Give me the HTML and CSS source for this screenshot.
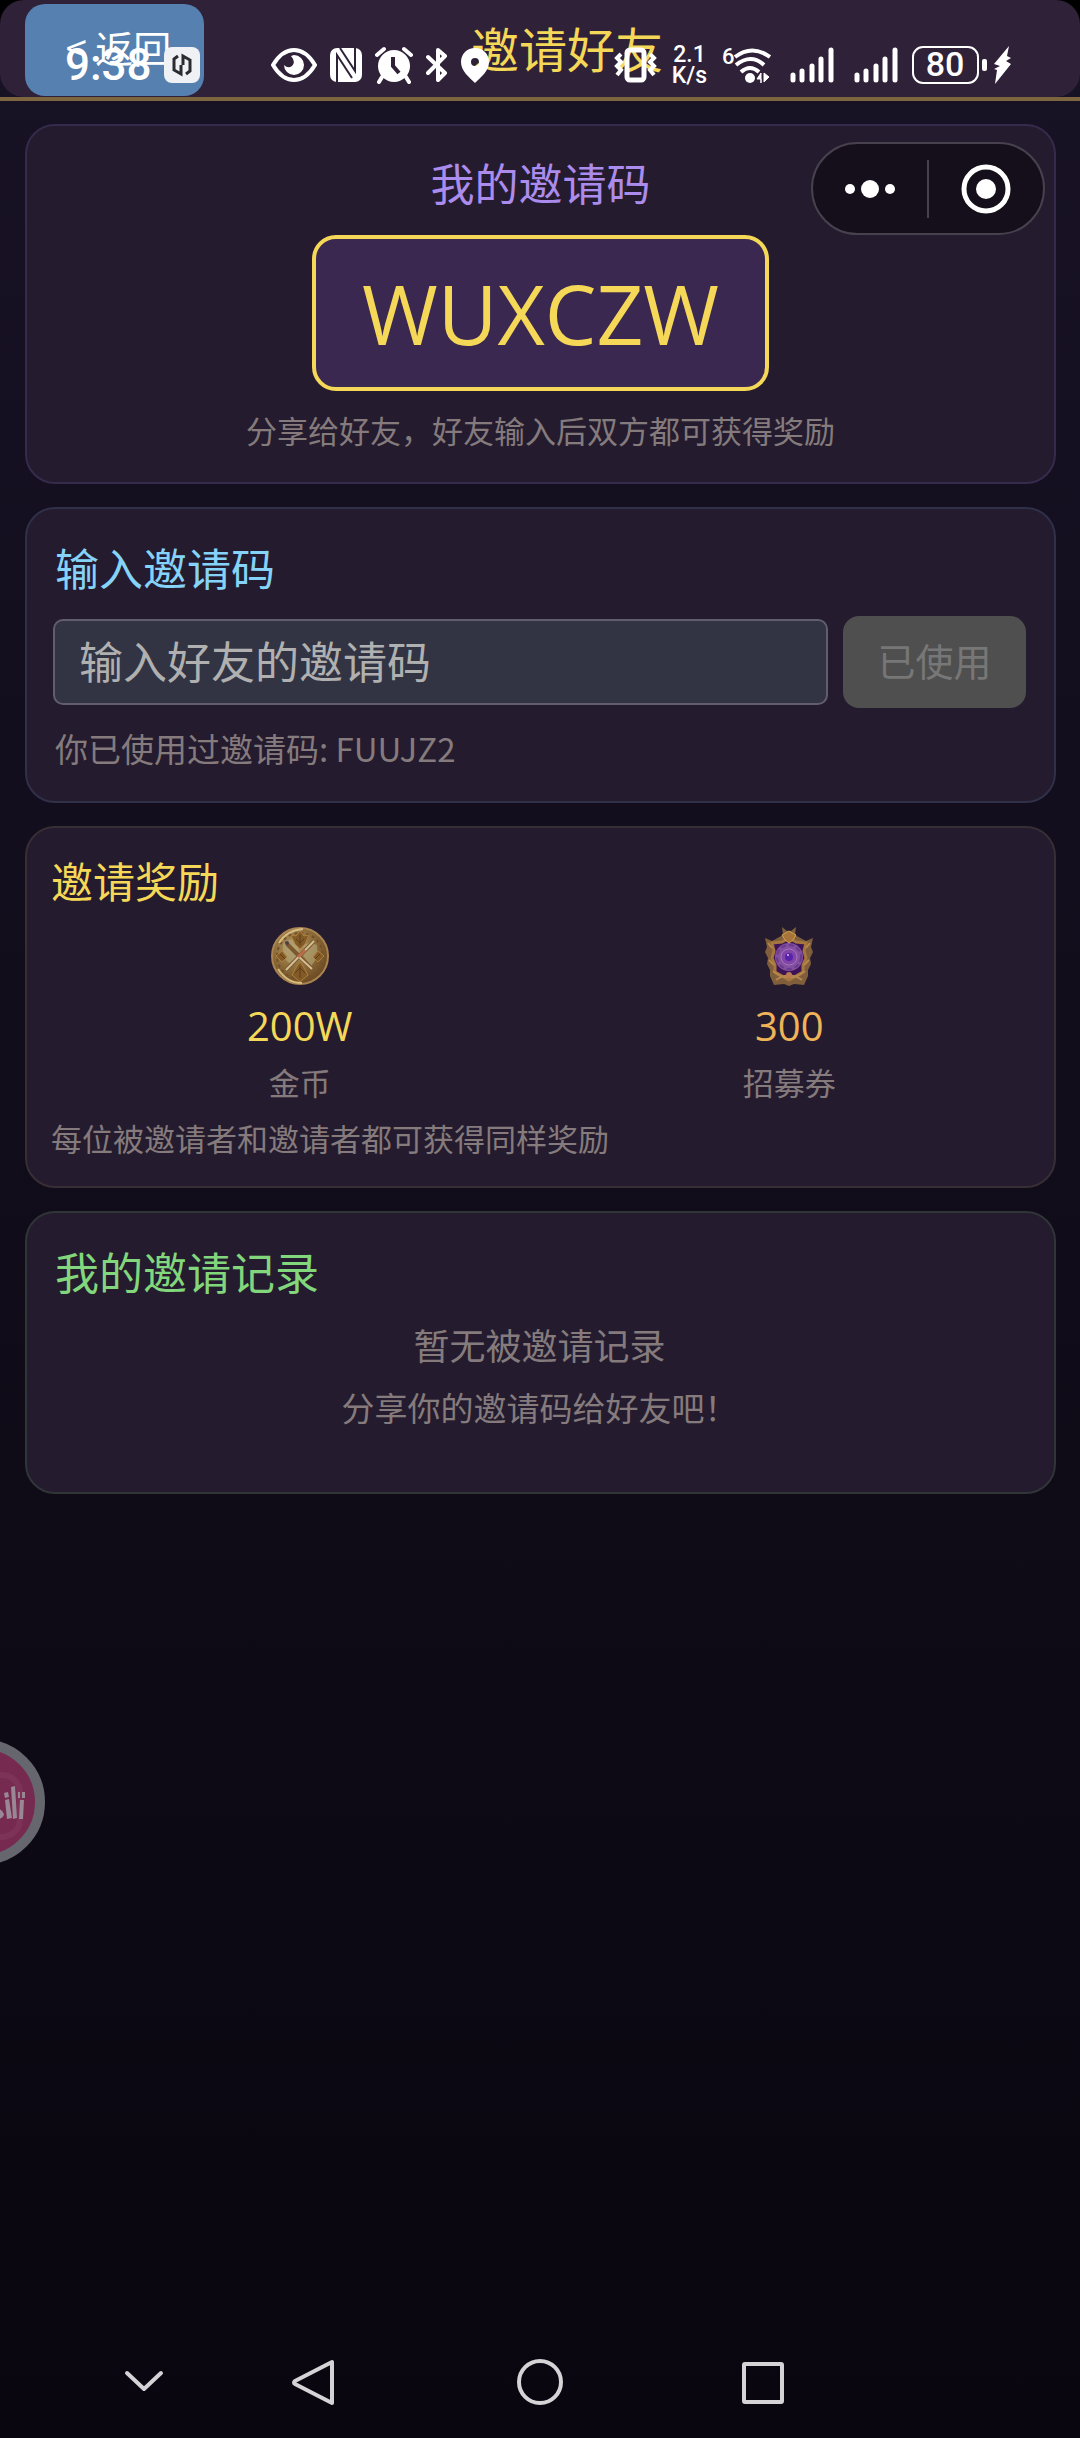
FILE: index.html
```
<!DOCTYPE html>
<html lang="zh-CN">
<head>
	<meta charset="UTF-8">
	<meta name="viewport" content="width=device-width, initial-scale=1.0">
	<title>邀请好友</title>
	<link rel="stylesheet" href="styles.css">
</head>
<body>
	<header class="header">
		<div class="header-bar">
			<button class="back-button" type="button">&lt; 返回</button>
			<h1>邀请好友</h1>
		</div>
	</header>

	<main class="content">
		<section class="card card-code">
			<h2>我的邀请码</h2>
			<div class="invite-code">WUXCZW</div>
			<p class="hint small">分享给好友，好友输入后双方都可获得奖励</p>
		</section>

		<section class="card card-input">
			<h2><label for="friend-code">输入邀请码</label></h2>
			<div class="input-row">
				<input id="friend-code" type="text" placeholder="输入好友的邀请码">
				<button class="used-button" type="button" disabled>已使用</button>
			</div>
			<p class="hint">你已使用过邀请码: FUUJZ2</p>
		</section>

		<section class="card card-reward">
			<h2>邀请奖励</h2>
			<div class="reward-list">
				<div class="reward">
					<svg width="60" height="60" viewBox="0 0 60 60">
						<defs>
							<radialGradient id="coin" cx="40%" cy="35%" r="65%">
								<stop offset="0" stop-color="#b39b66"/>
								<stop offset="0.6" stop-color="#8a6a38"/>
								<stop offset="1" stop-color="#6d4c24"/>
							</radialGradient>
						</defs>
						<circle cx="30" cy="30" r="28" fill="url(#coin)" stroke="#a98350" stroke-width="2"/>
						<circle cx="30" cy="30" r="23" fill="none" stroke="#74502a" stroke-width="2" stroke-dasharray="3 3"/>
						<path d="M13 18q8-8 13-2l4 12-9 10q-9-4-8-20zM47 19q-8-4-13 0l-2 9 9 12q8-8 6-21z" fill="#b5a77c" opacity=".6"/>
						<path d="M30 5l4 5 5-1-4 9-5 5-5-5-4-9 5 1zM6 30l6-5 5 6-5 5zM54 30l-6-5-5 6 5 5zM30 56l-8-7 5-9 3-4 3 4 5 9z" fill="#825a26" stroke="#ad7f3c"/>
						<path d="M30 9v10M26 13l4 4 4-4M30 40v12M25 47l5-5 5 5M10 28l5 5M50 28l-5 5" fill="none" stroke="#5f3d1c"/>
						<path d="M17 18l25 25M44 15L16 44" stroke="#7b5930" stroke-width="4"/>
						<path d="M28 30l14 13M44 15L16 44" stroke="#d3bd92" stroke-width="2"/>
						<path d="M28 31l7-7" stroke="#bb6a48" stroke-width="3"/>
						<circle cx="17" cy="17" r="2" fill="#4f3d44"/>
						<path d="M8 43q9 14 24 14M9 17Q17 4 33 3" fill="none" stroke="#d6bb80" stroke-width="2"/>
					</svg>
					<span class="amount gold">200W</span>
					<span class="hint small">金币</span>
				</div>
				<div class="reward">
					<svg width="60" height="60" viewBox="0 0 60 60">
						<path d="M6 12l7 3 11-6-1-8 5 4h4l5-4-1 8 11 6 7-3-2 9 2 5-3 6 1 6-3 6v6l-4 9-10-1-5 2-5-2-10 1-4-9v-6l-3-6 1-6-3-6 2-5z" fill="#805e3c"/>
						<path d="M13 17l2 8-2 7 3 7v7l14 8 14-8v-7l3-7-2-7 2-8-10-1-7-4-7 4z" fill="#3c1456" stroke="#a5773e" stroke-width="3"/>
						<circle cx="30" cy="31" r="14" fill="#8350a0"/>
						<circle cx="30" cy="31" r="12" fill="none" stroke="#6a3a8c" stroke-width="2" stroke-dasharray="5 3"/>
						<circle cx="30" cy="31" r="8" fill="#8145a8" stroke="#a874c0" stroke-width="1"/>
						<circle cx="30" cy="31" r="4" fill="#5722aa"/>
						<circle cx="29" cy="29" r="1" fill="#dfbaf2"/>
						<path d="M23 9l7-4 7 4-3 5-4 3-4-3z" fill="#a87538" stroke="#cda055"/>
						<path d="M14 45q8 7 16 6 8 1 16-6M17 54q7-5 13-4 6-1 13 4M9 17l4 5M51 17l-4 5M10 34l5 5M50 34l-5 5" fill="none" stroke="#b5864a" stroke-width="2"/>
						<circle cx="30" cy="49" r="3" fill="#b97b51"/>
					</svg>
					<span class="amount orange">300</span>
					<span class="hint small">招募券</span>
				</div>
			</div>
			<p class="hint small">每位被邀请者和邀请者都可获得同样奖励</p>
		</section>

		<section class="card card-records">
			<h2>我的邀请记录</h2>
			<div class="empty">
				<p class="empty-title">暂无被邀请记录</p>
				<p class="hint">分享你的邀请码给好友吧！</p>
			</div>
		</section>
	</main>

	<!-- Mini program menu -->
	<div class="capsule">
		<button type="button" aria-label="更多">
			<svg width="50" height="50" viewBox="0 0 50 50" fill="#fff">
				<circle cx="5" cy="25" r="5"/><circle cx="25" cy="25" r="9"/><circle cx="45" cy="25" r="5"/>
			</svg>
		</button>
		<button type="button" aria-label="关闭">
			<svg width="50" height="50" viewBox="0 0 50 50">
				<circle cx="25" cy="25" r="22" fill="none" stroke="#fff" stroke-width="5"/>
				<circle cx="25" cy="25" r="10" fill="#fff"/>
			</svg>
		</button>
	</div>

	<!-- Floating bubble docked on the left edge -->
	<div class="bubble">
		<svg width="126" height="126" viewBox="0 0 126 126">
			<circle cx="63" cy="63" r="58" fill="#762a50" stroke="#66666f" stroke-width="10"/>
			<rect x="20" y="36" width="81" height="62" rx="18" fill="none" stroke="#7d3258" stroke-width="6"/>
			<g fill="#9a8794">
				<path d="M66 68q16-1 19 7 0 6-19 8z"/>
				<path d="M86 61l4-1 3 19-5 1zM92 48l4-1 2 32-4 1zM101 61h4l-1 19h-4zM85 54l4-1 1 5-4 1zM99 53h2v6h-2zM103 53h3v6h-3z"/>
			</g>
		</svg>
	</div>

	<!-- System status bar -->
	<div class="status-bar">
		<div class="status-group">
			<span class="time">9:38</span>
			<svg class="app-icon" width="36" height="38" viewBox="0 0 36 38">
				<rect y="1" width="36" height="36" rx="8" fill="#f0f1f5"/>
				<path d="M14 10l-4 3v11l7 4v-9M22 28l4-3V14l-7-4v9" fill="none" stroke="#2c2c30" stroke-width="3"/>
			</svg>
			<svg width="46" height="38" viewBox="0 0 46 38">
				<path d="M2 19Q11 4 23 4t21 15Q35 34 23 34T2 19z" fill="none" stroke="#fff" stroke-width="4"/>
				<path d="M23 9a10 10 0 1 1-10 10q4 4 8 1 4-4-1-10z" fill="#fff"/>
			</svg>
			<svg width="32" height="38" viewBox="0 0 32 38">
				<rect y="2" width="32" height="34" rx="7" fill="#fff"/>
				<path d="M7 36V9l15 23M10 2l15 23V2" fill="none" stroke="#2f2138" stroke-width="2"/>
			</svg>
			<svg width="38" height="38" viewBox="0 0 38 38">
				<circle cx="19" cy="20" r="16" fill="#fff"/>
				<path d="M2 9l7-6M36 9l-7-6M7 31l-3 5M31 31l3 5" stroke="#fff" stroke-width="4" stroke-linecap="round"/>
				<path d="M18 11v9l6 7" fill="none" stroke="#2f2138" stroke-width="4"/>
			</svg>
			<svg width="22" height="38" viewBox="0 0 22 38">
				<path d="M2 11l17 16-7 7V4l7 6L2 27" fill="none" stroke="#fff" stroke-width="4" stroke-linejoin="round" stroke-linecap="round"/>
			</svg>
			<svg width="28" height="38" viewBox="0 0 28 38">
				<path fill-rule="evenodd" d="M14 2C6 2 0 8 0 16c0 9 8 15 14 21 6-6 14-12 14-21 0-8-6-14-14-14zm0 10a4 4 0 1 1 0 8 4 4 0 0 1 0-8z" fill="#fff"/>
			</svg>
		</div>
		<div class="status-group">
			<svg width="43" height="38" viewBox="0 0 43 38" fill="none" stroke="#fff">
				<rect x="13" y="4" width="17" height="30" rx="3" stroke-width="5"/>
				<path d="M7 8L3 12l4 4-4 4 4 4-4 5M36 8l4 4-4 4 4 4-4 4 4 5" stroke-width="4"/>
			</svg>
			<span class="speed">2.1<br>K/s</span>
			<svg width="49" height="38" viewBox="0 0 49 38">
				<text x="0" y="18" class="wifi-gen">6</text>
				<path d="M13 11q17-13 35 0M14 19q15-12 28 0M19 26q9-8 18 0" fill="none" stroke="#fff" stroke-width="4"/>
				<circle cx="28" cy="32" r="5" fill="#fff"/>
				<path d="M39 37V27l-4 6h4zM42 27v9l5-5z" fill="#fff" stroke="#fff"/>
			</svg>
			<div class="signals">
				<svg width="44" height="38" viewBox="0 0 44 38" stroke="#fff" stroke-width="5" stroke-linecap="round">
					<path d="M3 29v5M12 25v9M22 20v14M31 13v21M41 4v30"/>
				</svg>
				<svg width="44" height="38" viewBox="0 0 44 38" stroke="#fff" stroke-width="5" stroke-linecap="round">
					<path d="M3 29v5M12 25v9M22 20v14M31 13v21M41 4v30"/>
				</svg>
			</div>
			<svg width="99" height="38" viewBox="0 0 99 38">
				<rect x="1" y="1" width="65" height="36" rx="10" fill="none" stroke="#fff" stroke-width="2"/>
				<text x="33" y="30" text-anchor="middle" class="battery-level">80</text>
				<rect x="70" y="13" width="5" height="12" rx="2" fill="#fff"/>
				<path d="M97 0L82 18l6 2-6 3 3 1-2 14 16-20-5-3 5-3-4-2z" fill="#fff"/>
			</svg>
		</div>
	</div>

	<nav class="system-nav">
		<button type="button" aria-label="收起">
			<svg width="48" height="48" viewBox="0 0 48 48"><path d="M7 15l17 16 17-16"/></svg>
		</button>
		<button type="button" aria-label="返回键">
			<svg width="48" height="48" viewBox="0 0 48 48"><path d="M42 4v41L5 26q-2-1 0-3z"/></svg>
		</button>
		<button type="button" aria-label="主页">
			<svg width="48" height="48" viewBox="0 0 48 48"><circle cx="24" cy="24" r="21"/></svg>
		</button>
		<button type="button" aria-label="最近任务">
			<svg width="48" height="48" viewBox="0 0 48 48"><rect x="5" y="6" width="38" height="38" rx="1"/></svg>
		</button>
	</nav>
</body>
</html>
```
FILE: styles.css
```
:root {
	--page-margin: 25px;
	--card-background: #241b2e;
	--gold: #f5d857;
	--hint: #857b7d;
}

* {
	box-sizing: border-box;
}

body {
	position: relative;
	display: flex;
	flex-direction: column;
	min-height: 100vh;
	margin: 0;
	overflow-x: hidden;
	color: #fff;
	font-family: "Noto Sans CJK SC", sans-serif;
	font-size: 33px;
	line-height: 44px;
	background: linear-gradient(#181225, #0f0b17 60%, #090610);
}

h1,
h2,
p {
	margin: 0;
	font-weight: normal;
}

h2 {
	padding: 0 2px;
	font-size: 44px;
	line-height: 60px;
}

svg {
	display: block;
	flex: none;
}

button {
	border: none;
	padding: 0;
	color: inherit;
	font: inherit;
	background: none;
	cursor: pointer;
}

.header {
	border-bottom: 4px solid #7d663f;
	background: linear-gradient(#000 50%, #181225 50%);
}

.header-bar {
	display: flex;
	align-items: center;
	padding: 4px 150px 1px var(--page-margin);
	border-radius: 24px;
	background: #2f2138;
}

.header h1 {
	flex: 1;
	padding-bottom: 6px;
	color: var(--gold);
	font-size: 48px;
	line-height: 60px;
	text-align: center;
}

.back-button {
	width: 179px;
	height: 92px;
	padding: 0 0 6px 8px;
	border-radius: 20px;
	font-size: 38px;
	background: #5680b0;
}

.content {
	display: flex;
	flex-direction: column;
	gap: 23px;
	padding: 23px 24px 23px var(--page-margin);
}

.card {
	padding: 28px 28px 28px 26px;
	border: 2px solid #352b4d;
	border-radius: 30px;
	background: var(--card-background);
}

.hint {
	padding: 0 2px;
	color: var(--hint);
}

.small {
	font-size: 31px;
}

.card-code {
	display: flex;
	flex-direction: column;
	align-items: center;
	padding: 26px 26px 30px;
}

.card-code h2 {
	color: #ab8ced;
}

.invite-code {
	margin: 23px 0 17px;
	padding: 28px 46px;
	border: 4px solid var(--gold);
	border-radius: 24px;
	color: var(--gold);
	font-family: "Open Sans", sans-serif;
	font-size: 82px;
	line-height: 92px;
	background: #3a2850;
}

.card-input {
	border-color: #303049;
}

.card-input h2 {
	color: #85d3f8;
}

.input-row {
	display: flex;
	align-items: center;
	gap: 15px;
	margin: 19px 0 18px;
}

.input-row input {
	flex: 1;
	min-width: 0;
	height: 86px;
	padding: 0 24px 4px;
	border: 2px solid #625c70;
	border-radius: 10px;
	color: #fff;
	font: inherit;
	font-size: 44px;
	background: #323443;
}

.input-row input::placeholder {
	color: #b0b0b0;
}

.used-button {
	width: 183px;
	height: 92px;
	padding-bottom: 4px;
	border-radius: 16px;
	color: #777;
	font-size: 38px;
	background: #4f4f4f;
}

.card-input .hint {
	margin-bottom: 3px;
}

.card-reward {
	padding: 22px 20px 26px 24px;
	border-color: #382e35;
}

.card-reward h2 {
	padding: 0;
	color: var(--gold);
	font-size: 42px;
}

.card-reward > .hint {
	padding: 0;
}

.reward-list {
	display: grid;
	grid-template-columns: 1fr 1fr;
	margin: 16px 0 12px;
	padding-left: 4px;
}

.reward {
	display: flex;
	flex-direction: column;
	align-items: center;
}

.amount {
	margin: 16px 0 10px;
	font-family: "Open Sans", sans-serif;
	font-size: 40px;
	line-height: 48px;
}

.gold {
	color: var(--gold);
}

.orange {
	color: #efb458;
}

.card-records {
	border-color: #303538;
}

.card-records h2 {
	color: #82d67b;
}

.empty {
	padding: 19px 0 35px;
	text-align: center;
}

.empty-title {
	margin-bottom: 17px;
	color: var(--hint);
	font-size: 36px;
	line-height: 48px;
}

.capsule {
	position: absolute;
	top: 142px;
	right: 35px;
	display: flex;
	align-items: center;
	width: 234px;
	height: 93px;
	border: 2px solid #46414c;
	border-radius: 47px;
	background: #150f1c;
}

.capsule button {
	display: flex;
	flex: 1;
	align-items: center;
	justify-content: center;
	height: 58px;
}

.capsule button + button {
	border-left: 2px solid #46414c;
}

.bubble {
	position: absolute;
	top: 1739px;
	left: -81px;
}

.status-bar {
	position: absolute;
	top: 46px;
	left: 0;
	display: flex;
	justify-content: space-between;
	width: 100%;
	height: 38px;
	padding: 0 69px 0 65px;
	font-family: Roboto, sans-serif;
	pointer-events: none;
}

.status-group {
	display: flex;
	align-items: center;
	gap: 14px;
}

.status-group:first-child {
	gap: 13px;
}

.time {
	width: 86px;
	font-size: 44px;
	font-weight: 500;
}

.app-icon {
	margin-right: 58px;
}

.speed {
	width: 37px;
	font-size: 23px;
	font-weight: 500;
	line-height: 21px;
	text-align: center;
}

.wifi-gen {
	fill: #fff;
	font-size: 22px;
	font-weight: 500;
}

.signals {
	display: flex;
	gap: 20px;
	padding-left: 5px;
}

.battery-level {
	fill: #fff;
	font-size: 34px;
	font-weight: 500;
}

.system-nav {
	display: grid;
	grid-template-columns: 58fr 172fr 168fr 284fr 162fr 236fr;
	margin-top: auto;
	padding: 32px 0;
}

.system-nav button {
	display: flex;
	justify-content: center;
}

.system-nav button:first-child {
	grid-column: 2;
}

.system-nav svg {
	fill: none;
	stroke: #d6d3d6;
	stroke-width: 4;
	stroke-linecap: round;
	stroke-linejoin: round;
}
```
